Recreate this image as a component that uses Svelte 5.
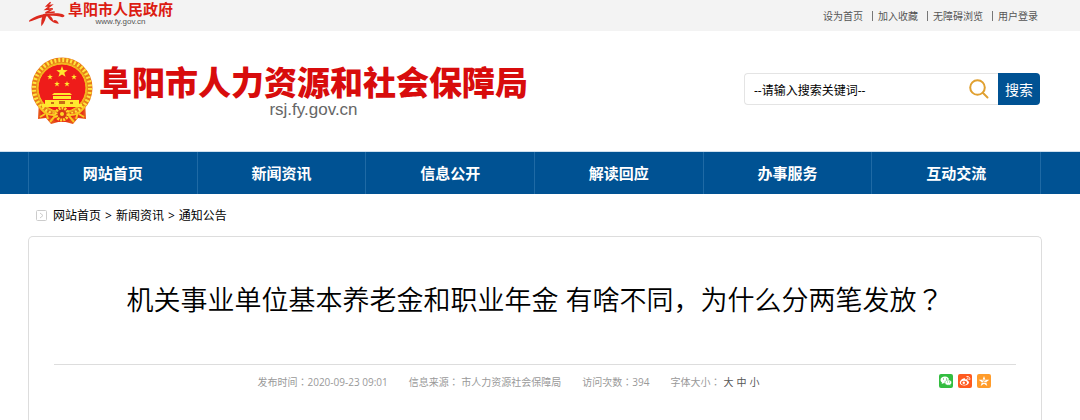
<script lang="ts">
	let keyword = $state('--请输入搜索关键词--');
	let fontSize = $state<'large' | 'medium' | 'small'>('medium');

	const userLinks = ['设为首页', '加入收藏', '无障碍浏览', '用户登录'];
	const navItems = ['网站首页', '新闻资讯', '信息公开', '解读回应', '办事服务', '互动交流'];
	const crumbs = ['网站首页', '新闻资讯', '通知公告'];

	const sizes = [
		{ key: 'large', label: '大' },
		{ key: 'medium', label: '中' },
		{ key: 'small', label: '小' }
	] as const;

	const star = '0,-10 2.4,-3.2 9.5,-3.1 3.8,1.2 5.9,8.1 0,4 -5.9,8.1 -3.8,1.2 -9.5,-3.1 -2.4,-3.2';
</script>

<div class="topbar">
	<div class="wrap topbar-inner">
		<a class="gov-logo" href="#gov">
			<svg class="gov-mark" viewBox="0 0 36 26" aria-hidden="true">
				<path d="M1 21C0 19 9 14.500 17 13.500C24 12.500 34 12.500 35.500 15C35.500 17 33 17 31 16C26 14.500 20 15 15 16.500C9 18 4 20.500 1 21Z" />
				<path d="M18 13C17.500 18 16 22 13 25.500C12.500 22 13 17 15 13.500Z" />
				<path d="M18 14C22 15 24 17 24.500 20C26 18.500 29 20 30 23C25 23 20 19 18 14Z" />
				<path d="M22 2L18.500 5.500L22.500 5L17.500 9L24 8.500L17 12.500L26 11.500" class="tower" />
			</svg>
			<span class="gov-text">
				<span class="gov-name">阜阳市人民政府</span>
				<span class="gov-url">www.fy.gov.cn</span>
			</span>
		</a>
		<div class="user-links">
			{#each userLinks as label, i (label)}
				{#if i > 0}<span class="bar"></span>{/if}
				<a href="#user">{label}</a>
			{/each}
		</div>
	</div>
</div>

<header class="wrap header">
	<a class="site-logo" href="#home">
		<svg class="emblem" viewBox="0 0 62 68" aria-hidden="true">
			<path d="M8 44L7 62L15 61L20 67L31 64L42 67L47 61L55 62L54 44Z" fill="#e8541a" />
			<circle cx="31" cy="31" r="28" fill="#f0b01f" stroke="#e87b18" stroke-width="5" />
			<circle cx="31" cy="31" r="28" fill="none" stroke="#ffe33d" stroke-width="4" stroke-dasharray="2 2" />
			<circle cx="31" cy="31" r="24" fill="#ee1c1a" stroke="#f7c51f" stroke-width="1" />
			<g fill="#ffe82e">
				<polygon points={star} transform="translate(31 15) scale(.6)" />
				<polygon points={star} transform="translate(19 20) scale(.3)" />
				<polygon points={star} transform="translate(43 20) scale(.3)" />
				<polygon points={star} transform="translate(26 27) scale(.3)" />
				<polygon points={star} transform="translate(36 27) scale(.3)" />
				<path d="M21 38L23 36H39L41 38ZM22 39H40V42H22ZM14 43H48V47H51V50H11V47H14Z" />
			</g>
			<path d="M28 47V44H34V47M20 47V45H23V47M39 47V45H42V47" fill="#c96c17" />
			<path d="M9 51C16 58 23 58 31 54C39 58 46 58 53 51L52 61L43 60L37 65H25L19 60L10 61Z" fill="#e7321a" />
			<path d="M8 49C14 59 24 60 31 55C38 60 48 59 54 49M9 60L14 57M53 60L48 57M19 65L24 59M43 65L38 59M15 55L17 62M47 55L45 62" fill="none" stroke="#f9c821" stroke-width="2" />
			<circle cx="31" cy="57" r="6" fill="#d83a16" stroke="#ffd626" stroke-width="3" stroke-dasharray="2 1" />
			<circle cx="31" cy="57" r="2" fill="#ffd626" />
		</svg>
		<span class="site-text">
			<span class="site-name">阜阳市人力资源和社会保障局</span>
			<span class="site-url">rsj.fy.gov.cn</span>
		</span>
	</a>

	<form class="search" onsubmit={(e) => e.preventDefault()}>
		<div class="search-field">
			<input type="text" aria-label="搜索" bind:value={keyword} />
			<svg class="search-icon" viewBox="0 0 20 20" aria-hidden="true">
				<circle cx="8.500" cy="8.500" r="7.300" />
				<path d="M14 14L18.500 18.500" />
			</svg>
		</div>
		<button type="submit">搜索</button>
	</form>
</header>

<nav class="nav">
	<div class="wrap">
		<div class="nav-inner">
			{#each navItems as label (label)}
				<a href="#nav">{label}</a>
			{/each}
		</div>
	</div>
</nav>

<main class="wrap">
	<div class="crumbs">
		<svg class="crumb-icon" viewBox="0 0 11 11" aria-hidden="true">
			<rect x=".5" y=".5" width="10" height="10" rx="1" />
			<path d="M4 3L7 5.500L4 8" />
		</svg>
		{#each crumbs as label, i (label)}
			{#if i > 0}<span>&gt;</span>{/if}
			<a href="#crumb">{label}</a>
		{/each}
	</div>

	<article class="card">
		<h1>机关事业单位基本养老金和职业年金 有啥不同，为什么分两笔发放<span class="mark">？</span></h1>
		<div class="meta">
			<div class="meta-info">
				<span>发布时间：2020-09-23 09:01</span>
				<span>信息来源： 市人力资源社会保障局</span>
				<span>访问次数：394</span>
				<span class="sizes">
					字体大小：
					{#each sizes as s (s.key)}
						<button type="button" onclick={() => (fontSize = s.key)}>{s.label}</button>
					{/each}
				</span>
			</div>
			<div class="share">
				<a class="wechat" href="#wechat" aria-label="微信">
					<svg viewBox="0 0 14 14">
						<path d="M6 2.500C3.300 2.500 1.500 4 1.500 6C1.500 7.200 2.200 8 3 8.600L2.700 10L4.300 9.200C8 9.500 10 8 10 6C10 4 8.300 2.500 6 2.500Z" />
						<path d="M9.300 6C7.200 6 5.900 7.200 5.900 8.700C5.900 10.500 7.800 11.500 10.300 11.100L11.700 11.800L11.400 10.600C13.900 8.800 12.400 6 9.300 6Z" stroke="#33bd40" stroke-width=".5" />
						<path d="M4 5H5M7 5H8M8 8H8.700M10.300 8H11" stroke="#33bd40" />
					</svg>
				</a>
				<a class="weibo" href="#weibo" aria-label="微博">
					<svg viewBox="0 0 14 14">
						<path d="M5.500 4.500C7 4 7.300 4.800 7 5.600C8.500 5 9.800 5.200 9.400 6.500C13 8 10 11.700 6.200 11.500C1.500 11.300 .8 8.400 3 6C3.800 5.200 4.700 4.700 5.500 4.500Z" />
						<ellipse cx="6" cy="8.700" rx="3" ry="2" fill="#ff5a1f" />
						<circle cx="5.800" cy="8.800" r="1.200" />
						<path d="M8.500 2.500C11 2 12.300 4 11.700 6M8.900 4.200C10 4 10.500 4.700 10.200 5.600" fill="none" stroke="#fff" stroke-width=".9" />
					</svg>
				</a>
				<a class="qzone" href="#qzone" aria-label="QQ空间">
					<svg viewBox="0 0 14 14">
						<polygon points={star} transform="translate(7 7.500) scale(.56)" />
						<path d="M5 6H8.500L5.500 8.500H9" fill="none" stroke="#ff9c2b" stroke-width=".7" />
					</svg>
				</a>
			</div>
		</div>
	</article>
</main>

<style>
	:global(body) {
		margin: 0;
		background: #fff;
		color: #000;
		font-family: "Open Sans", "Noto Sans CJK SC", sans-serif;
		font-size: 12px;
	}
	a { color: inherit; text-decoration: none; }
	button, input { font-family: inherit; }
	.wrap { margin: 0 38px 0 28px; }

	.topbar { background: #f3f3f3; }
	.topbar-inner {
		display: flex;
		justify-content: space-between;
		align-items: center;
		height: 31px;
	}
	.gov-logo { display: flex; gap: 3px; align-items: flex-start; height: 100%; }
	.gov-mark { width: 37px; height: 27px; fill: #dc2a1e; }
	.tower { fill: none; stroke: #dc2a1e; stroke-width: 1.5; }
	.gov-text { display: flex; flex-direction: column; align-items: center; }
	.gov-name {
		color: #dc1c12;
		font-family: "Noto Sans CJK SC", sans-serif;
		font-size: 15px;
		font-weight: 700;
		line-height: 18px;
	}
	.gov-url {
		color: #555;
		font-family: "Liberation Sans", sans-serif;
		font-size: 8px;
		line-height: 8px;
	}
	.user-links {
		display: flex;
		align-items: center;
		padding-right: 4px;
		color: #555;
		font-size: 10px;
	}
	.bar { width: 1px; height: 10px; margin: 0 5px 0 9px; background: #777; }

	.header {
		display: flex;
		justify-content: space-between;
		align-items: center;
		height: 120px;
	}
	.site-logo { display: flex; align-items: center; gap: 6px; padding-left: 3px; }
	.emblem { width: 62px; height: 68px; }
	.site-text { display: flex; flex-direction: column; align-items: center; }
	.site-name {
		color: #d80c0c;
		font-family: "Noto Sans CJK SC", sans-serif;
		font-size: 33px;
		font-weight: 900;
		line-height: 38px;
	}
	.site-url {
		color: #666;
		font-family: "Liberation Sans", sans-serif;
		font-size: 17px;
		line-height: 20px;
	}

	.search { display: flex; height: 32px; margin-bottom: 4px; padding-right: 2px; }
	.search-field {
		display: flex;
		align-items: center;
		width: 254px;
		box-sizing: border-box;
		padding: 0 9px;
		border: 1px solid #e4e4e4;
		border-right: 0;
		border-radius: 4px 0 0 4px;
	}
	.search-field input {
		flex: 1;
		min-width: 0;
		padding: 2px 0 0;
		border: 0;
		outline: none;
		background: none;
		font-size: 12px;
	}
	.search-icon {
		width: 20px;
		height: 20px;
		fill: none;
		stroke: #e0a030;
		stroke-width: 2;
		stroke-linecap: round;
	}
	.search button {
		width: 42px;
		padding: 0;
		border: 0;
		border-radius: 0 4px 4px 0;
		background: #005293;
		color: #fff;
		font-size: 14px;
		cursor: pointer;
	}

	.nav { border-top: 1px solid #cfe0ee; background: #005293; }
	.nav-inner { display: flex; margin-right: 1px; border-left: 1px solid #1f6aa5; }
	.nav-inner a {
		flex: 1;
		border-right: 1px solid #1f6aa5;
		color: #fff;
		font-size: 15px;
		font-weight: 700;
		line-height: 42px;
		text-align: center;
	}

	.crumbs {
		display: flex;
		align-items: center;
		gap: 4px;
		height: 42px;
		padding-left: 8px;
	}
	.crumb-icon {
		width: 11px;
		height: 11px;
		margin-right: 2px;
		fill: none;
		stroke: #ccc;
	}

	.card {
		padding: 0 25px 22px;
		border: 1px solid #ddd;
		border-bottom: 0;
		border-radius: 5px 5px 0 0;
	}
	h1 {
		margin: 0;
		padding: 42px 0 44px;
		font-size: 27px;
		font-weight: 350;
		line-height: 40px;
		text-align: center;
	}
	/* centred full-width punctuation */
	.mark { font-family: "Noto Sans CJK TC", sans-serif; }
	.meta {
		display: flex;
		align-items: center;
		padding: 0 25px 0 24px;
		border-top: 1px solid #ddd;
		color: #999;
		font-family: "Open Sans", "Noto Sans CJK TC", sans-serif;
		font-size: 10px;
		line-height: 34px;
	}
	.meta-info { display: flex; flex: 1; justify-content: center; gap: 21px; }
	.sizes { display: flex; align-items: baseline; gap: 3px; }
	.sizes button {
		padding: 0;
		border: 0;
		background: none;
		color: #555;
		font-size: 10px;
		line-height: inherit;
		cursor: pointer;
	}
	.share { display: flex; gap: 5px; padding-bottom: 2px; }
	.share a { display: flex; border-radius: 2px; }
	.share svg { width: 14px; height: 14px; fill: #fff; }
	.wechat { background: #33bd40; }
	.weibo { background: #ff5a1f; }
	.qzone { background: #ff9c2b; }
</style>
